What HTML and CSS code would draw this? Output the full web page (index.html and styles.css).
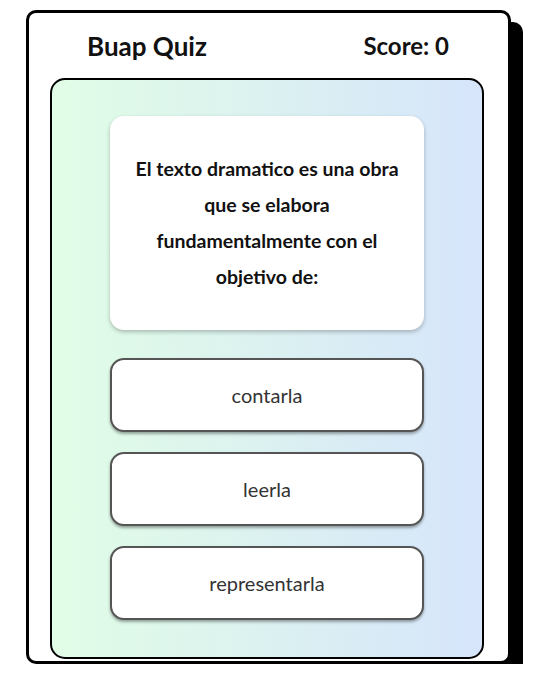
FILE: index.html
```html
<!DOCTYPE html>
<html lang="es">

<head>
    <meta charset="UTF-8">
    <meta name="viewport" content="width=device-width, initial-scale=1.0">
    <title>Buap Quiz</title>
    <link rel="stylesheet" href="styles.css">
</head>

<body>
    <div class="quiz-container">
        <div class="quiz-header">
            <h1 class="quiz-title">Buap Quiz</h1>
            <div class="score" id="score">Score: 0</div>
        </div>

        <div class="quiz-body">
            <div class="question-card">
                <p class="question" id="question">El texto dramatico es una obra que se elabora fundamentalmente con el objetivo de:</p>
            </div>

            <ul class="answers" id="answers">
                <li><button class="answer-btn">contarla</button></li>
                <li><button class="answer-btn">leerla</button></li>
                <li><button class="answer-btn">representarla</button></li>
            </ul>
        </div>
    </div>
</body>

</html>
```

FILE: styles.css
```css
body {
    margin: 0;
    padding: 10px 0 0 0;
    background-color: #fff;
    font-family: Lato, "Open Sans", sans-serif;
}

.quiz-container {
    width: 479px;
    margin: 0 0 0 26px;
    padding-bottom: 2px;
    border: 3px solid #000;
    border-radius: 10px;
    background-color: #fff;
    box-shadow: 12px 12px 0 #000;
}

.quiz-header {
    display: flex;
    justify-content: space-between;
    align-items: center;
    height: 65px;
    padding: 0 59px 0 58px;
}

.quiz-title {
    margin: 0;
    font-size: 26px;
    font-weight: 700;
    color: #111;
}

.score {
    font-size: 24px;
    font-weight: 700;
    color: #111;
}

.quiz-body {
    width: 434px;
    margin: 0 0 0 21px;
    padding: 36px 58px 37px 58px;
    box-sizing: border-box;
    border: 2px solid #000;
    border-radius: 15px;
    background: linear-gradient(90deg, #e1fde6, #d6e5fb);
}

.question-card {
    background-color: #fff;
    border-radius: 14px;
    padding: 35px 18px;
    box-shadow: 0 2px 4px rgba(0, 0, 0, 0.25);
    text-align: center;
}

.question {
    margin: 0;
    font-size: 19.5px;
    font-weight: 700;
    line-height: 36px;
    color: #111;
}

ul {
    list-style: none;
}

.answers {
    margin: 28px 0 0 0;
    padding: 0;
    display: flex;
    flex-direction: column;
    gap: 20px;
}

.answer-btn {
    width: 100%;
    height: 74px;
    background-color: #fff;
    border: 2px solid #555;
    border-radius: 14px;
    box-shadow: 0 2px 3px rgba(0, 0, 0, 0.35);
    font-family: Lato, "Open Sans", sans-serif;
    font-size: 20px;
    color: #333;
    cursor: pointer;
}

.answer-btn:hover {
    background-color: #f3f3f3;
}
```
